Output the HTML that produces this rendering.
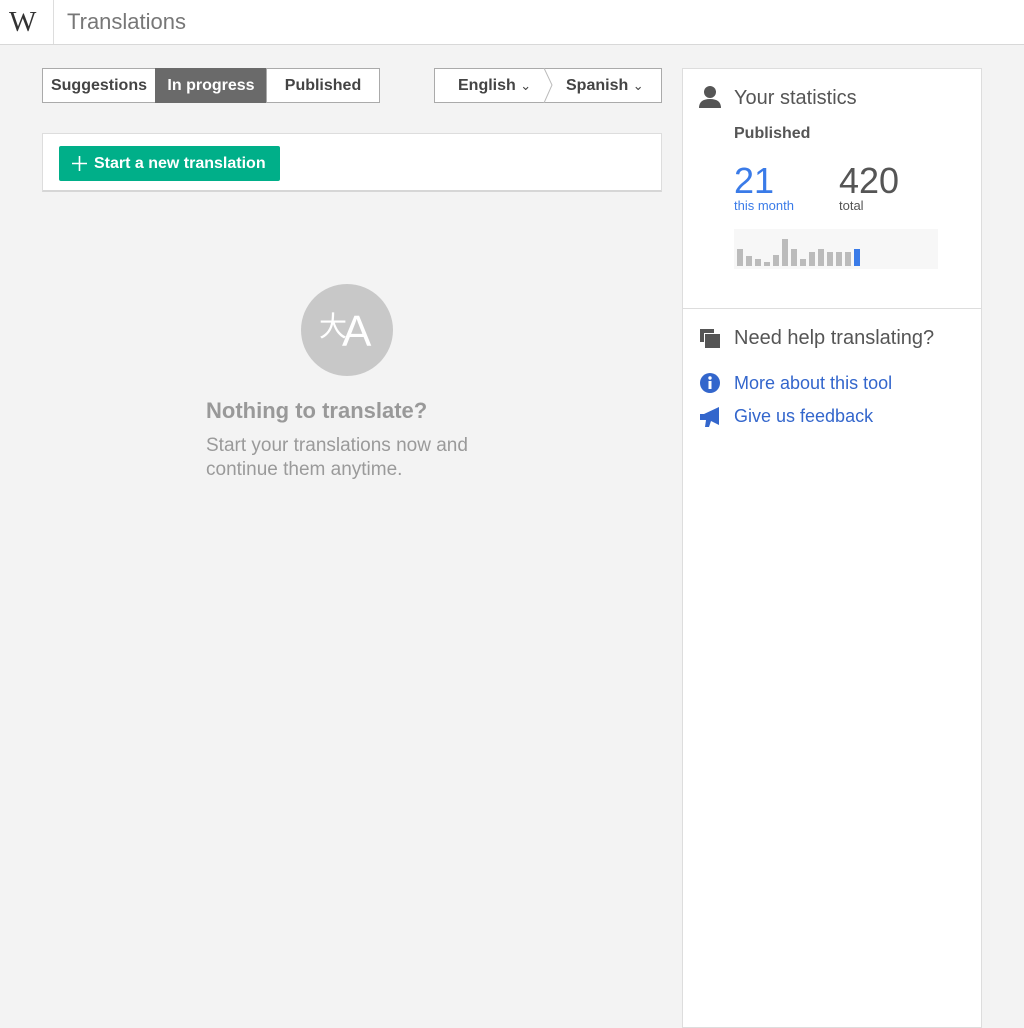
<!DOCTYPE html>
<html><head><meta charset="utf-8"><style>
*{box-sizing:border-box;margin:0;padding:0}
body{width:1024px;height:1024px;background:#f3f3f3;font-family:"Liberation Sans",Arial,sans-serif;position:relative;overflow:hidden;color:#555}
.a{position:absolute}
.hdr{left:0;top:0;width:1024px;height:45px;background:#fff;border-bottom:1px solid #d8d8d8}
.btn{position:absolute;top:68px;height:35px;border:1px solid #aaa;background:#fff;font-weight:bold;font-size:16px;color:#444;display:flex;align-items:center;justify-content:center}
.bar{position:absolute;width:6px;background:#bbb;bottom:0}
</style></head><body>
<div class="a hdr">
 <div class="a" style="left:9px;top:6px;font-family:'Liberation Serif',serif;font-size:29px;color:#333">W</div>
 <div class="a" style="left:53px;top:0;width:1px;height:44px;background:#ddd"></div>
 <div class="a" style="left:67px;top:9px;font-size:22px;color:#777">Translations</div>
</div>
<div class="btn" style="left:42px;width:114px">Suggestions</div>
<div class="btn" style="left:155px;width:112px;background:#6a6a6a;border-color:#6a6a6a;color:#fff">In progress</div>
<div class="btn" style="left:266px;width:114px">Published</div>
<div class="btn" style="left:434px;width:228px;justify-content:flex-start">
 <span style="position:absolute;left:23px">English <span style="font-weight:normal;font-size:13px">&#8964;</span></span>
 <svg class="a" style="left:108px;top:-1px" width="12" height="35"><path d="M1 0 L9 17 L1 35" fill="none" stroke="#bbb"/></svg>
 <span style="position:absolute;left:131px">Spanish <span style="font-weight:normal;font-size:13px">&#8964;</span></span>
</div>
<div class="a" style="left:42px;top:133px;width:620px;height:59px;background:#fff;border:1px solid #ddd;border-bottom:2px solid #d6d6d6"></div>
<div class="a" style="left:59px;top:146px;width:221px;height:35px;background:#00af89;border-radius:2px;color:#fff;font-weight:bold;font-size:16px;line-height:35px;padding-left:35px">Start a new translation
 <svg class="a" style="left:13px;top:10px" width="15" height="15"><path d="M7.5 0V15M0 7.5H15" stroke="#fff" stroke-width="1.6"/></svg></div>
<div class="a" style="left:301px;top:284px;width:92px;height:92px;border-radius:50%;background:#c8c8c8"></div>
<div class="a" style="left:319px;top:305px;font-family:'Noto Sans CJK SC',sans-serif;font-size:28px;color:#fff">大</div>
<div class="a" style="left:342px;top:308px;font-size:44px;color:#fff;line-height:48px">A</div>
<div class="a" style="left:206px;top:398px;font-size:22px;font-weight:bold;color:#999">Nothing to translate?</div>
<div class="a" style="left:206px;top:434px;font-size:19px;line-height:24px;color:#9a9a9a">Start your translations now and<br>continue them anytime.</div>

<div class="a" style="left:682px;top:68px;width:300px;height:960px;background:#fff;border:1px solid #ddd"></div>
<div class="a" style="left:683px;top:308px;width:298px;height:1px;background:#ddd"></div>
<svg class="a" style="left:698px;top:85px" width="26" height="24"><circle cx="12" cy="7" r="6" fill="#555"/><path d="M1 23 Q1 14 12 14 Q23 14 23 23Z" fill="#555"/></svg>
<div class="a" style="left:734px;top:87px;font-size:20px;color:#555">Your statistics</div>
<div class="a" style="left:734px;top:125px;font-size:16px;font-weight:bold;color:#555">Published</div>
<div class="a" style="left:734px;top:160px;font-size:36px;color:#3a7be8">21</div>
<div class="a" style="left:839px;top:160px;font-size:36px;color:#555">420</div>
<div class="a" style="left:734px;top:198px;font-size:13px;color:#3a7be8">this month</div>
<div class="a" style="left:839px;top:198px;font-size:13px;color:#555">total</div>
<div class="a" style="left:734px;top:229px;width:204px;height:40px;background:#f7f7f7">
 <div class="bar" style="left:3px;height:17px;bottom:3px"></div>
 <div class="bar" style="left:12px;height:10px;bottom:3px"></div>
 <div class="bar" style="left:21px;height:7px;bottom:3px"></div>
 <div class="bar" style="left:30px;height:4px;bottom:3px"></div>
 <div class="bar" style="left:39px;height:11px;bottom:3px"></div>
 <div class="bar" style="left:48px;height:27px;bottom:3px"></div>
 <div class="bar" style="left:57px;height:17px;bottom:3px"></div>
 <div class="bar" style="left:66px;height:7px;bottom:3px"></div>
 <div class="bar" style="left:75px;height:14px;bottom:3px"></div>
 <div class="bar" style="left:84px;height:17px;bottom:3px"></div>
 <div class="bar" style="left:93px;height:14px;bottom:3px"></div>
 <div class="bar" style="left:102px;height:14px;bottom:3px"></div>
 <div class="bar" style="left:111px;height:14px;bottom:3px"></div>
 <div class="bar" style="left:120px;height:17px;bottom:3px;background:#3a7be8"></div>
</div>
<svg class="a" style="left:698px;top:329px" width="24" height="20"><path d="M2 0H16V4H6V13H2Z" fill="#555"/><rect x="7" y="5" width="15" height="14" fill="#555"/></svg>
<div class="a" style="left:734px;top:327px;font-size:20px;color:#555">Need help translating?</div>
<svg class="a" style="left:699px;top:372px" width="22" height="22"><circle cx="11" cy="11" r="10" fill="#36c"/><rect x="9.5" y="9" width="3" height="8" fill="#fff"/><circle cx="11" cy="6" r="1.7" fill="#fff"/></svg>
<div class="a" style="left:734px;top:373px;font-size:18px;color:#36c">More about this tool</div>
<svg class="a" style="left:699px;top:406px" width="24" height="22"><path d="M1 8H5L20 1V19L12 15L10 21H6L7 14H1Z" fill="#36c"/></svg>
<div class="a" style="left:734px;top:406px;font-size:18px;color:#36c">Give us feedback</div>
</body></html>
